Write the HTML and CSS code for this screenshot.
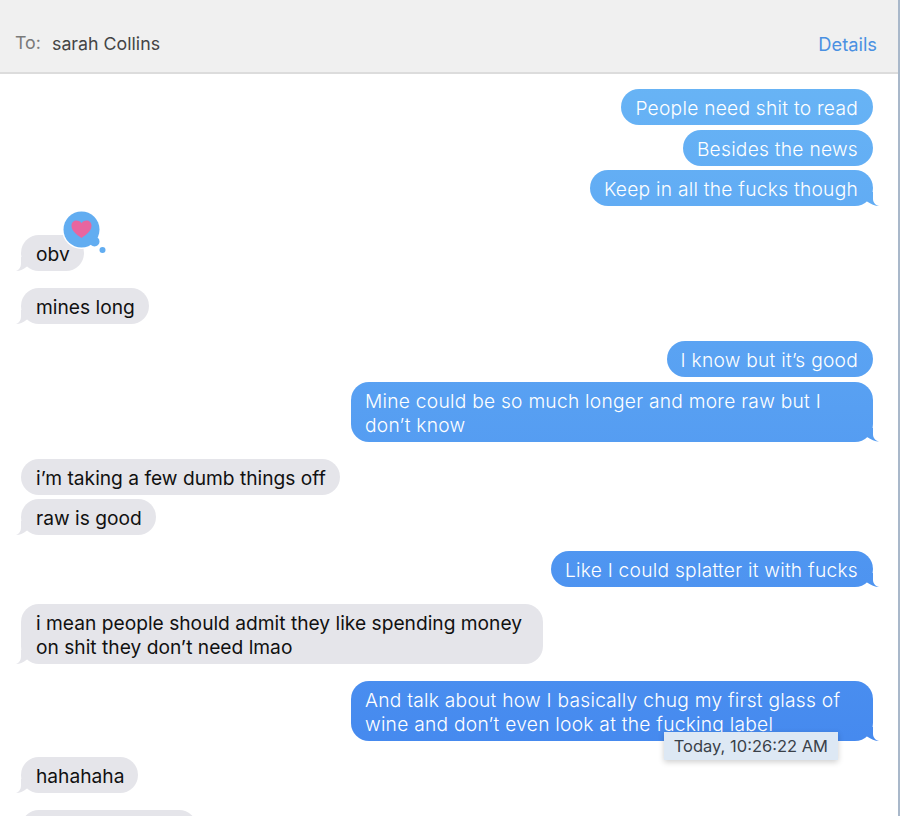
FILE: index.html
```html
<!DOCTYPE html>
<html lang="en">

<head>
  <meta charset="UTF-8" />
  <title>Messages</title>
  <link rel="stylesheet" href="styles.css">
</head>

<body>
  <div class="window">
    <!-- header -->
    <div class="top">
      <span class="to">To:</span>
      <span class="name">sarah Collins</span>
      <span class="details">Details</span>
    </div>
    <!-- messages -->
    <div class="list">
      <div class="group me">
        <div class="msg">People need shit to read</div>
        <div class="msg">Besides the news</div>
        <div class="msg tail">Keep in all the fucks though</div>
      </div>
      <div class="group reacted">
        <div class="msg tail">obv
          <svg class="heart" width="46" height="46" viewBox="0 0 46 46">
            <circle cx="21.500" cy="20.500" r="19.500" fill="#fff" />
            <circle cx="34.500" cy="32.500" r="6.500" fill="#fff" />
            <circle cx="21.500" cy="20.500" r="18" fill="#62adf1" />
            <circle cx="34.500" cy="32.500" r="5" fill="#62adf1" />
            <circle cx="42.500" cy="41" r="3" fill="#62adf1" />
            <path d="M21.500 29 C16 25 11.500 22 11.500 16.500 C11.500 13.500 13.800 11.500 16.500 11.500 C18.500 11.500 20.500 12.500 21.500 14.200 C22.500 12.500 24.500 11.500 26.500 11.500 C29.200 11.500 31.500 13.500 31.500 16.500 C31.500 22 27 25 21.500 29 Z" fill="#e8659f" />
          </svg>
        </div>
      </div>
      <div class="group">
        <div class="msg tail">mines long</div>
      </div>
      <div class="group me">
        <div class="msg">I know but it’s good</div>
        <div class="msg tail wide">Mine could be so much longer and more raw but I don’t know</div>
      </div>
      <div class="group">
        <div class="msg">i’m taking a few dumb things off</div>
        <div class="msg tail">raw is good</div>
      </div>
      <div class="group me tight">
        <div class="msg tail">Like I could splatter it with fucks</div>
      </div>
      <div class="group">
        <div class="msg tail wide">i mean people should admit they like spending money on shit they don’t need lmao</div>
      </div>
      <div class="group me">
        <div class="msg tail wide">And talk about how I basically chug my first glass of wine and don’t even look at the fucking label
          <div class="tip">Today, 10:26:22 AM</div>
        </div>
      </div>
      <div class="group tight">
        <div class="msg tail">hahahaha</div>
      </div>
      <div class="group">
        <div class="msg cut">&nbsp;</div>
      </div>
    </div>
  </div>
</body>

</html>
```

FILE: styles.css
```css
* {
  margin: 0;
  padding: 0;
  box-sizing: border-box;
}

body {
  background: #fff;
  font-family: Inter, "Liberation Sans", sans-serif;
}

.window {
  height: 816px;
  overflow: hidden;
  border-right: 2px solid #a9b8ca;
}

.top {
  height: 74px;
  display: flex;
  align-items: flex-end;
  padding: 0 21px 16px 15px;
  background: #f0f0f0;
  border-bottom: 2px solid #dcdcdc;
  font-size: 17.800px;
  line-height: 24px;
}

.to {
  color: #7a7a7a;
  width: 37px;
  margin-bottom: 1px;
}

.name {
  color: #444;
  flex: 1;
}

.details {
  color: #4a90e2;
  font-size: 18.300px;
}

.list {
  display: flex;
  flex-direction: column;
  gap: 17px;
  padding: 15px 25px 0 21px;
}

.group {
  display: flex;
  flex-direction: column;
  align-items: flex-start;
  gap: 4.500px;
}

.group.me {
  align-items: flex-end;
}

.reacted {
  margin-top: 12px;
}

.tight {
  margin-top: -1px;
}

.msg {
  position: relative;
  padding: 7px 14px 5px 15px;
  border-radius: 18px;
  background: #e5e5ea;
  color: #111;
  font-size: 19.200px;
  line-height: 24px;
}

.me .msg {
  padding: 7px 15px 5px 14px;
  background: linear-gradient(#6cb9f6, #4285ee) fixed;
  color: #fff;
  font-weight: 300;
  letter-spacing: 0.250px;
}

.wide {
  width: 522px;
}

.cut {
  width: 176px;
}

/* bubble tail */
.tail::after {
  content: "";
  position: absolute;
  bottom: 0;
  left: -5px;
  width: 16px;
  height: 14px;
  background: inherit;
  clip-path: path("M5 0 L5 7 C5 10 3 13 0 14 C4 14 8 12 11 9.500 L14 0 Z");
}

.me .tail::after {
  left: auto;
  right: -6px;
  clip-path: path("M10 0 L10 7 C10 10 12 13 16 14 C12 14 8 12 4 9.500 L2 0 Z");
}

.heart {
  position: absolute;
  left: 39px;
  top: -26px;
}

.tip {
  position: absolute;
  top: 51px;
  right: 35px;
  padding: 0 10px;
  background: #dde8f4;
  color: #3a4149;
  font-size: 16.500px;
  font-weight: 400;
  letter-spacing: 0;
  line-height: 28px;
  white-space: nowrap;
  box-shadow: 0 2px 6px rgba(0, 0, 0, 0.2);
}
```
